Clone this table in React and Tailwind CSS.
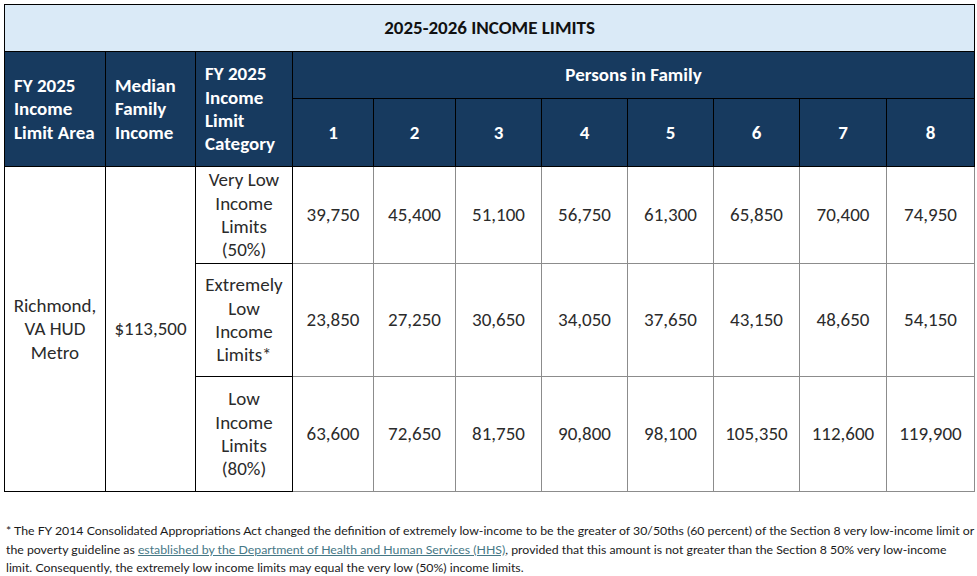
const persons = ["1", "2", "3", "4", "5", "6", "7", "8"]

const rows = [
  {
    label: ["Very Low", "Income", "Limits", "(50%)"],
    values: ["39,750", "45,400", "51,100", "56,750", "61,300", "65,850", "70,400", "74,950"],
    h: "h-[97px]",
  },
  {
    label: ["Extremely", "Low", "Income", "Limits*"],
    values: ["23,850", "27,250", "30,650", "34,050", "37,650", "43,150", "48,650", "54,150"],
    h: "h-[113px]",
  },
  {
    label: ["Low", "Income", "Limits", "(80%)"],
    values: ["63,600", "72,650", "81,750", "90,800", "98,100", "105,350", "112,600", "119,900"],
    h: "h-[115px]",
  },
]

const colWidths = [101, 90, 97, 81, 82, 86, 86, 86, 86, 87, 88]

export default function App() {
  return (
    <div className="w-[977px] h-[576px] bg-white overflow-hidden pt-[4px] pl-[4px]">
      <table
        className="table-fixed border-collapse text-[19px] leading-[23.3px] font-['Carlito','Lato',sans-serif]"
        style={{ width: 971 }}
      >
        <colgroup>
          {colWidths.map((w, i) => (
            <col key={i} style={{ width: w }} />
          ))}
        </colgroup>
        <thead>
          {/* Title */}
          <tr className="h-[47px]">
            <th
              colSpan={11}
              className="border border-black bg-[#daeaf7] text-[#111] font-bold text-center align-middle"
            >
              2025-2026 INCOME LIMITS
            </th>
          </tr>
          <tr className="h-[47px]">
            <th
              rowSpan={2}
              className="border border-black bg-[#173a5f] text-white font-bold text-left align-middle pl-[9px] pr-0 whitespace-nowrap"
            >
              FY 2025
              <br />
              Income
              <br />
              Limit Area
            </th>
            <th
              rowSpan={2}
              className="border border-black bg-[#173a5f] text-white font-bold text-left align-middle pl-[9px] pr-0 whitespace-nowrap"
            >
              Median
              <br />
              Family
              <br />
              Income
            </th>
            <th
              rowSpan={2}
              className="border border-black bg-[#173a5f] text-white font-bold text-left align-middle pl-[9px] pr-0 whitespace-nowrap"
            >
              FY 2025
              <br />
              Income
              <br />
              Limit
              <br />
              Category
            </th>
            <th
              colSpan={8}
              className="border border-black bg-[#173a5f] text-white font-bold text-center align-middle"
            >
              Persons in Family
            </th>
          </tr>
          <tr className="h-[68px]">
            {persons.map((p) => (
              <th
                key={p}
                className="border border-black bg-[#173a5f] text-white font-bold text-center align-middle"
              >
                {p}
              </th>
            ))}
          </tr>
        </thead>
        <tbody className="text-[#2b2b2b]">
          {rows.map((row, ri) => (
            <tr key={ri} className={row.h}>
              {ri === 0 && (
                <>
                  <td rowSpan={3} className="border border-black text-center align-middle px-0 whitespace-nowrap">
                    Richmond,
                    <br />
                    VA HUD
                    <br />
                    Metro
                  </td>
                  <td rowSpan={3} className="border border-black text-center align-middle px-0 whitespace-nowrap">
                    $113,500
                  </td>
                </>
              )}
              <td className="border border-black text-center align-middle px-0 whitespace-nowrap">
                {row.label.map((l, i) => (
                  <div key={i}>{l}</div>
                ))}
              </td>
              {row.values.map((v, vi) => (
                <td key={vi} className="border border-[#8c8c8c] text-center align-middle whitespace-nowrap">
                  {v}
                </td>
              ))}
            </tr>
          ))}
        </tbody>
      </table>

      {/* Footnote */}
      <div className="mt-[30px] pl-[2px] text-[12.3px] leading-[18.5px] text-[#1a1a1a] font-['Lato',sans-serif] whitespace-nowrap">
        <div>
          * The FY 2014 Consolidated Appropriations Act changed the definition of extremely low-income to be the greater of 30/50ths (60 percent) of the Section 8 very low-income limit or
        </div>
        <div>
          the poverty guideline as{" "}
          <a href="#" className="text-[#467886] underline">
            established by the Department of Health and Human Services (HHS)
          </a>
          , provided that this amount is not greater than the Section 8 50% very low-income
        </div>
        <div>limit. Consequently, the extremely low income limits may equal the very low (50%) income limits.</div>
      </div>
    </div>
  )
}
